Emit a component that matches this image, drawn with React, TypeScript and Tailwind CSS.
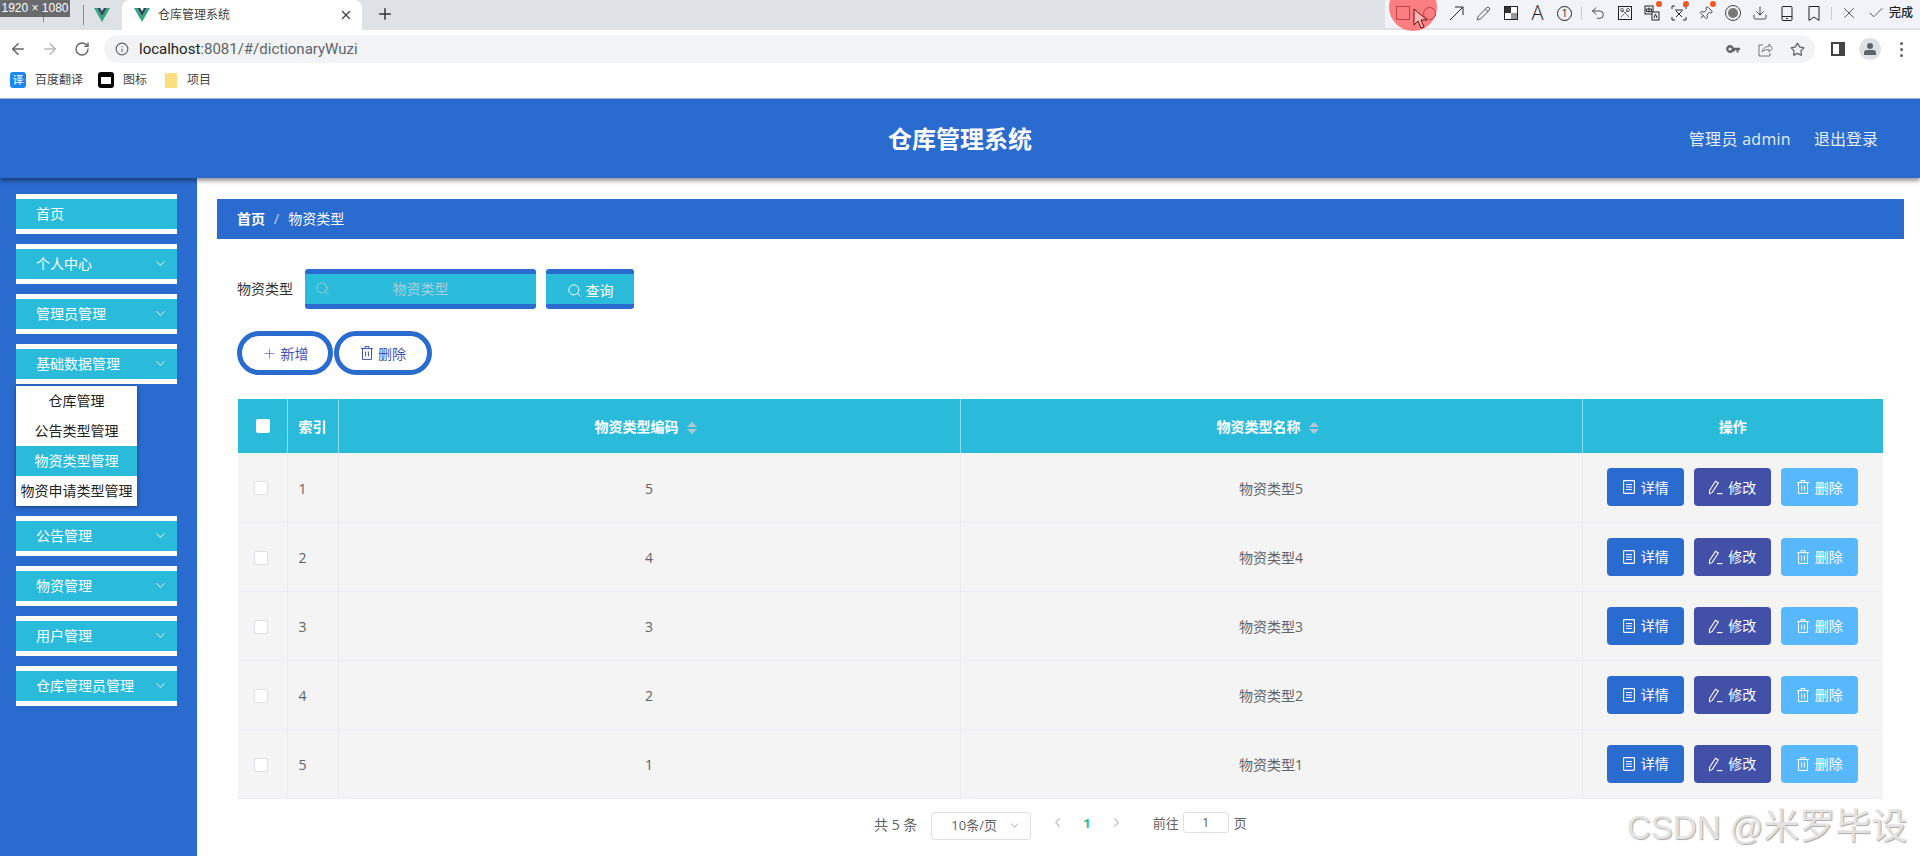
import React from 'react';
import {
  ArrowLeft, ArrowRight, RotateCw, Info, Star, X, Plus, ChevronDown,
  ChevronLeft, ChevronRight, Search, Pencil, Undo2, Scissors, Pin, Download, Check,
} from 'lucide-react';

const sideTop = ['个人中心', '管理员管理', '基础数据管理'];
const sideBottom = ['公告管理', '物资管理', '用户管理', '仓库管理员管理'];
const subItems = ['仓库管理', '公告类型管理', '物资类型管理', '物资申请类型管理'];
const rows = [
  { id: 1, code: 5, name: '物资类型5' },
  { id: 2, code: 4, name: '物资类型4' },
  { id: 3, code: 3, name: '物资类型3' },
  { id: 4, code: 2, name: '物资类型2' },
  { id: 5, code: 1, name: '物资类型1' },
];

const VueLogo = () => (
  <svg width="16" height="14" viewBox="0 0 16 14">
    <path d="M0 0h3.2L8 8.2 12.8 0H16L8 14z" fill="#35a77f" />
    <path d="M3.2 0h3L8 3.2 9.8 0h3L8 8.2z" fill="#2f4858" />
  </svg>
);

// element-ui style icons
const TicketIcon = () => (
  <svg width="14" height="16" viewBox="0 0 14 16" fill="none" stroke="currentColor" strokeWidth="1.1">
    <rect x="1.6" y="1.6" width="10.8" height="12.8" rx="0.6" />
    <path d="M4 5.5h6M4 8h6M4 10.5h6" />
  </svg>
);

const EditIcon = () => (
  <svg width="15" height="16" viewBox="0 0 15 16" fill="none" stroke="currentColor" strokeWidth="1.1">
    <path d="M1.5 11.5 7.5 2.2l2.8 1.8-6 9.4-2.8 1.3z" />
    <path d="M9 14.6h5.5" />
  </svg>
);

const DeleteIcon = () => (
  <svg width="14" height="16" viewBox="0 0 14 16" fill="none" stroke="currentColor" strokeWidth="1">
    <path d="M1 3.6h12M5 3.6V1.6h4v2M2.5 3.6v10.8h9V3.6M5.6 6.5v5M8.4 6.5v5" />
  </svg>
);

const Dot = () => <span className="absolute top-[1px] right-[3px] w-[6px] h-[6px] rounded-full bg-[#ee5a24]" />;

const Tool = ({ children, dot }: { children: React.ReactNode; dot?: boolean }) => (
  <div className="relative w-[27px] h-[26px] flex items-center justify-center text-[#222]">
    {children}
    {dot && <Dot />}
  </div>
);

const AnnotationBar = () => (
  <div className="ml-auto w-[535px] h-[30px] bg-[#f1f3f9] border-b-2 border-[#dfe1e5] flex items-center pl-[4px] pb-[2px]">
    <Tool><span className="w-[14px] h-[14px] border border-[#222]" /></Tool>
    <Tool><span className="w-[13px] h-[13px] rounded-full border border-[#222]" /></Tool>
    <Tool>
      <svg width="15" height="15" viewBox="0 0 15 15" fill="none" stroke="#222" strokeWidth="1">
        <path d="M1 14 14 1M6 1h8v8" />
      </svg>
    </Tool>
    <Tool><Pencil size={15} strokeWidth={1.2} /></Tool>
    <Tool>
      <svg width="14" height="14" viewBox="0 0 14 14">
        <rect x="0.5" y="0.5" width="13" height="13" fill="#fff" stroke="#222" />
        <rect x="1" y="1" width="6" height="6" fill="#333" />
        <rect x="7" y="7" width="6" height="6" fill="#999" />
      </svg>
    </Tool>
    <Tool><span className="text-[20px] leading-none font-['Open_Sans',sans-serif] font-light">A</span></Tool>
    <Tool>
      <span className="w-[15px] h-[15px] rounded-full border border-[#222] text-[10px] leading-[13px] text-center">1</span>
    </Tool>
    <span className="ml-[3px] mr-[2px] w-px h-[13px] bg-[#ccc]" />
    <Tool><Undo2 size={16} strokeWidth={1.2} /></Tool>
    <Tool>
      <span className="w-[14px] h-[14px] border border-[#222] flex items-center justify-center">
        <Scissors size={12} strokeWidth={1.3} className="rotate-90" />
      </span>
    </Tool>
    <Tool dot>
      <svg width="16" height="16" viewBox="0 0 16 16" fill="none" stroke="#222" strokeWidth="1">
        <rect x="1" y="1" width="8" height="8" />
        <path d="M5 2.5v5M2.5 4h5v2.5h-5z" />
        <rect x="8" y="7" width="7" height="8" fill="#f1f3f9" />
        <path d="M10 13l1.5-4 1.5 4" />
      </svg>
    </Tool>
    <Tool dot>
      <svg width="16" height="16" viewBox="0 0 16 16" fill="none" stroke="#222" strokeWidth="1">
        <path d="M1 4V1h3M12 1h3v3M15 12v3h-3M4 15H1v-3M5 6l6 6M11 6l-6 6M4 5h8" />
      </svg>
    </Tool>
    <Tool dot><Pin size={15} strokeWidth={1.3} className="rotate-45" /></Tool>
    <Tool>
      <span className="w-[16px] h-[16px] rounded-full border border-[#444] flex items-center justify-center">
        <span className="w-[10px] h-[10px] rounded-full bg-[#777]" />
      </span>
    </Tool>
    <Tool><Download size={16} strokeWidth={1.2} /></Tool>
    <Tool>
      <svg width="12" height="15" viewBox="0 0 12 15" fill="none" stroke="#222" strokeWidth="1">
        <rect x="1" y="0.5" width="10" height="14" rx="1" />
        <path d="M1 10.5h10M5 12.5h2" />
      </svg>
    </Tool>
    <Tool>
      <svg width="12" height="15" viewBox="0 0 12 15" fill="none" stroke="#222" strokeWidth="1">
        <path d="M1 0.5h10v14l-5-3.5-5 3.5z" />
      </svg>
    </Tool>
    <span className="ml-[4px] mr-[3px] w-px h-[13px] bg-[#ccc]" />
    <Tool><X size={18} strokeWidth={1} /></Tool>
    <Tool><Check size={18} strokeWidth={1} /></Tool>
    <span className="text-[12px] font-medium text-[#222]">完成</span>
  </div>
);

const BrowserChrome = () => (
  <div className="relative h-[99px] bg-white border-b border-[#9fb4d8]">
    {/* tabs */}
    <div className="h-[30px] bg-[#dee1e6] flex items-start">
      <div className="w-[122px] h-[30px] flex items-center">
        <span className="ml-[43px] w-px h-[14px] bg-[#888]" />
        <span className="ml-[39px] w-px h-[20px] bg-[#888]" />
        <span className="ml-[10px]"><VueLogo /></span>
      </div>
      <div className="w-[240px] h-[30px] bg-white rounded-t-lg flex items-center pl-[12px] pr-[9px]">
        <VueLogo />
        <span className="ml-[8px] text-[12px] text-[#444]">仓库管理系统</span>
        <X size={14} strokeWidth={2.4} className="ml-auto text-[#444]" />
      </div>
      <Plus size={18} strokeWidth={2} className="ml-[14px] mt-[5px] text-[#333]" />
      <AnnotationBar />
    </div>
    {/* address row */}
    <div className="h-[38px] flex items-center text-[#5f6368]">
      <ArrowLeft size={18} className="ml-[9px]" />
      <ArrowRight size={18} className="ml-[14px] text-[#b5b8bc]" />
      <RotateCw size={16} className="ml-[15px]" />
      <div className="ml-[14px] w-[1711px] h-[28px] rounded-full bg-[#f1f3f4] flex items-center pl-[11px]">
        <Info size={14} />
        <span className="ml-[10px] text-[15px] font-['Roboto',sans-serif] text-[#202124]">
          localhost<span className="text-[#5f6368]">:8081/#/dictionaryWuzi</span>
        </span>
        <svg width="14" height="8" viewBox="0 0 14 8" fill="#5f6368" className="ml-auto mr-[18px]">
          <path d="M4 0a4 4 0 0 1 3.8 2.7H14V5h-1.5v2.5h-2V5H9v1.5H7.3A4 4 0 1 1 4 0zm0 2.4a1.6 1.6 0 1 0 0 3.2 1.6 1.6 0 0 0 0-3.2z" />
        </svg>
        <svg width="15" height="15" viewBox="0 0 15 15" fill="none" stroke="#777" strokeWidth="1" className="mr-[17px]">
          <path d="M5 3H1v11h11v-3M4 10c1-4 4-5.500 7-5.500V2l3.500 4.500L11 10V7.500C8.500 7.500 6 8 4 10z" />
        </svg>
        <Star size={15} className="mr-[10px]" />
      </div>
      <span className="ml-[16px] w-[14px] h-[14px] border-2 border-[#444] border-r-[6px]" />
      <span className="ml-[14px] w-[22px] h-[22px] rounded-full bg-[#dee1e6] flex flex-col items-center justify-center">
        <span className="w-[6px] h-[6px] rounded-full bg-[#5f6368]" />
        <span className="mt-[1px] w-[12px] h-[5px] rounded-t-[3px] bg-[#5f6368]" />
      </span>
      <span className="ml-[19px] flex flex-col gap-[3px]">
        <span className="w-[3px] h-[3px] rounded-full bg-[#5f6368]" />
        <span className="w-[3px] h-[3px] rounded-full bg-[#5f6368]" />
        <span className="w-[3px] h-[3px] rounded-full bg-[#5f6368]" />
      </span>
    </div>
    {/* bookmarks */}
    <div className="h-[30px] pb-[6px] flex items-center text-[12px] text-[#444]">
      <span className="ml-[10px] w-[16px] h-[16px] rounded-[3px] bg-[#1a88f0] text-white text-[11px] leading-[16px] text-center">译</span>
      <span className="ml-[9px]">百度翻译</span>
      <span className="ml-[15px] w-[16px] h-[16px] rounded-[3px] bg-black flex items-center justify-center">
        <span className="w-[10px] h-[7px] bg-white" />
      </span>
      <span className="ml-[9px]">图标</span>
      <span className="ml-[18px] w-[12px] h-[15px] rounded-[1px] bg-[#fbdc7f]" />
      <span className="ml-[10px]">项目</span>
    </div>
    {/* screenshot tool overlays */}
    <div className="absolute left-0 top-0 w-[70px] h-[17px] bg-[#555]/85 text-white text-[12px] leading-[17px] text-center font-['Liberation_Sans',sans-serif]">
      1920 × 1080
    </div>
    <div className="absolute left-[1389px] top-[-17px] w-[48px] h-[48px] rounded-full bg-[#ff4d4f]/70" />
    <svg width="15" height="21" viewBox="0 0 15 21" fill="#ffb3b3" stroke="#6b0d0d" strokeWidth="1" className="absolute left-[1413px] top-[8px]">
      <path d="M1 1v16l4-4 3 7 3-1-3-7h6z" />
    </svg>
  </div>
);

const SideItem = ({ label, arrow = true }: { label: string; arrow?: boolean }) => (
  <div className="h-[40px] pb-[2px] border-y-[5px] border-white bg-[#2abbdb] flex items-center pl-[20px] pr-[9px] text-white text-[14px]">
    <span>{label}</span>
    {arrow && <ChevronDown size={15} strokeWidth={1.5} className="ml-auto" />}
  </div>
);

const Sidebar = () => (
  <aside className="w-[197px] shrink-0 bg-[#2a6bcf] pt-[16px] pl-[16px] pr-[20px] flex flex-col">
    <div className="flex flex-col gap-[10px]">
      <SideItem label="首页" arrow={false} />
      {sideTop.map((s) => <SideItem key={s} label={s} />)}
    </div>
    <div className="w-[121px] mt-[2px] mb-[10px] bg-white shadow-[0_1px_4px_rgba(0,0,0,0.4)] text-[14px] text-[#222]">
      {subItems.map((s) => (
        <div
          key={s}
          className={s === '物资类型管理'
            ? 'h-[30px] leading-[29px] text-center whitespace-nowrap bg-[#2abbdb] text-white'
            : 'h-[30px] leading-[29px] text-center whitespace-nowrap'}
        >
          {s}
        </div>
      ))}
    </div>
    <div className="flex flex-col gap-[10px]">
      {sideBottom.map((s) => <SideItem key={s} label={s} />)}
    </div>
  </aside>
);

const SortIcon = () => (
  <span className="inline-flex flex-col gap-[2px] ml-[8px] align-middle">
    <span className="w-0 h-0 border-x-[5px] border-x-transparent border-b-[5px] border-b-[#b4c6d4]" />
    <span className="w-0 h-0 border-x-[5px] border-x-transparent border-t-[5px] border-t-[#b4c6d4]" />
  </span>
);

const ActionBtn = ({ color, icon, label }: { color: string; icon: React.ReactNode; label: string }) => (
  <button className={`w-[77px] h-[38px] rounded-[4px] text-white text-[14px] flex items-center justify-center gap-[5px] ${color}`}>
    {icon}
    {label}
  </button>
);

const DataTable = () => (
  <table className="ml-[41px] mt-[24px] w-[1645px] table-fixed border-collapse text-[14px]">
    <colgroup>
      <col className="w-[49px]" />
      <col className="w-[51px]" />
      <col className="w-[622px]" />
      <col className="w-[622px]" />
      <col className="w-[301px]" />
    </colgroup>
    <thead>
      <tr className="h-[54px] bg-[#2abbdb] text-white font-bold">
        <th className="pl-[1px] border-r border-[#8fdcec]">
          <span className="block mx-auto w-[14px] h-[14px] rounded-[2px] bg-white" />
        </th>
        <th className="border-r border-[#8fdcec]">索引</th>
        <th className="pr-[7px] border-r border-[#8fdcec]">物资类型编码<SortIcon /></th>
        <th className="pr-[7px] border-r border-[#8fdcec]">物资类型名称<SortIcon /></th>
        <th>操作</th>
      </tr>
    </thead>
    <tbody>
      {rows.map((r) => (
        <tr key={r.id} className="h-[69px] bg-[#f4f4f5] text-[#606266] border-b border-[#ebeef5]">
          <td className="pt-[2px] pr-[2px] border-r border-[#ededf0]">
            <span className="block mx-auto w-[14px] h-[14px] rounded-[2px] bg-white border border-[#dcdfe6]" />
          </td>
          <td className="pt-[2px] pl-[11px] border-r border-[#ededf0]">{r.id}</td>
          <td className="pt-[2px] text-center border-r border-[#ededf0]">{r.code}</td>
          <td className="pt-[2px] text-center border-r border-[#ededf0]">{r.name}</td>
          <td>
            <div className="flex justify-center gap-[10px] pr-[1px]">
              <ActionBtn color="bg-[#2a6bcf]" icon={<TicketIcon />} label="详情" />
              <ActionBtn color="bg-[#4350a8]" icon={<EditIcon />} label="修改" />
              <ActionBtn color="bg-[#58b8fd]" icon={<DeleteIcon />} label="删除" />
            </div>
          </td>
        </tr>
      ))}
    </tbody>
  </table>
);

const Pagination = () => (
  <div className="mt-[13px] pl-[677px] flex items-start text-[13px] text-[#606266]">
    <span className="mt-[2px] text-[14px]">共 5 条</span>
    <div className="ml-[14px] w-[100px] h-[28px] rounded-[3px] border border-[#dcdfe6] flex items-center pl-[19px] pr-[9px]">
      10条/页
      <ChevronDown size={13} className="ml-auto text-[#c0c4cc]" />
    </div>
    <ChevronLeft size={15} strokeWidth={2} className="ml-[19px] mt-[3px] text-[#c0c4cc]" />
    <span className="ml-[18px] mt-[2px] font-bold text-[#2dbd98]">1</span>
    <ChevronRight size={15} strokeWidth={2} className="ml-[18px] mt-[3px] text-[#c0c4cc]" />
    <span className="ml-[29px] mt-[2px]">前往</span>
    <span className="ml-[4px] w-[46px] h-[21px] rounded-[3px] border border-[#dcdfe6] text-center leading-[19px]">1</span>
    <span className="ml-[5px] mt-[2px]">页</span>
  </div>
);

const Content = () => (
  <main className="flex-1 min-w-0">
    <div className="ml-[20px] mr-[16px] mt-[21px] h-[40px] pb-[2px] bg-[#2a6bcf] flex items-center pl-[20px] text-[14px] text-white">
      <span className="font-bold">首页</span>
      <span className="mx-[9px] text-[#c0d3f0]">/</span>
      <span>物资类型</span>
    </div>
    <div className="mt-[30px] ml-[40px] h-[40px] flex items-center text-[14px]">
      <span className="pb-[2px] text-[#333]">物资类型</span>
      <div className="ml-[12px] w-[231px] h-[40px] pb-[2px] rounded-[3px] border-y-[5px] border-[#2a6bcf] bg-[#2abbdb] relative flex items-center justify-center text-[#a9cfdc]">
        <Search size={15} strokeWidth={1.3} className="absolute left-[10px]" />
        物资类型
      </div>
      <button className="ml-[10px] w-[88px] h-[40px] pt-[2px] rounded-[3px] border-y-[5px] border-[#2a6bcf] bg-[#2abbdb] text-white flex items-center justify-center gap-[4px]">
        <Search size={15} strokeWidth={1.5} />
        查询
      </button>
    </div>
    <div className="mt-[22px] ml-[40px] h-[44px] flex gap-[1px] text-[14px] text-[#3f51b5]">
      <button className="w-[96px] h-[44px] rounded-full border-[5px] border-[#2a6bcf] bg-white flex items-center justify-center gap-[4px]">
        <Plus size={15} strokeWidth={1} />
        新增
      </button>
      <button className="w-[98px] h-[44px] rounded-full border-[5px] border-[#2a6bcf] bg-white flex items-center justify-center gap-[4px]">
        <DeleteIcon />
        删除
      </button>
    </div>
    <DataTable />
    <Pagination />
  </main>
);

export default function App() {
  return (
    <div className="relative w-[1920px] h-[856px] overflow-hidden bg-white flex flex-col font-['Open_Sans','Noto_Sans_CJK_SC',sans-serif]">
      <BrowserChrome />
      <header className="relative z-10 h-[79px] shrink-0 bg-[#2a6bcf] shadow-[0_3px_4px_rgba(0,0,0,0.4)] grid grid-cols-3 items-center text-white">
        <span />
        <h1 className="text-center text-[24px] font-bold">仓库管理系统</h1>
        <div className="flex justify-end gap-[23px] pr-[42px] text-[16px] text-[#e4effc]">
          <span className="tracking-[0.3px]">管理员 admin</span>
          <span>退出登录</span>
        </div>
      </header>
      <div className="flex flex-1 min-h-0">
        <Sidebar />
        <Content />
      </div>
      <div className="absolute left-[1627px] top-[800px] text-[#e2e2e2] [text-shadow:1px_1px_1px_#a8a8a8] font-['Liberation_Sans','Noto_Sans_CJK_SC',sans-serif] whitespace-nowrap text-[33px]">
        CSDN @<span className="text-[36px]">米罗毕设</span>
      </div>
    </div>
  );
}
